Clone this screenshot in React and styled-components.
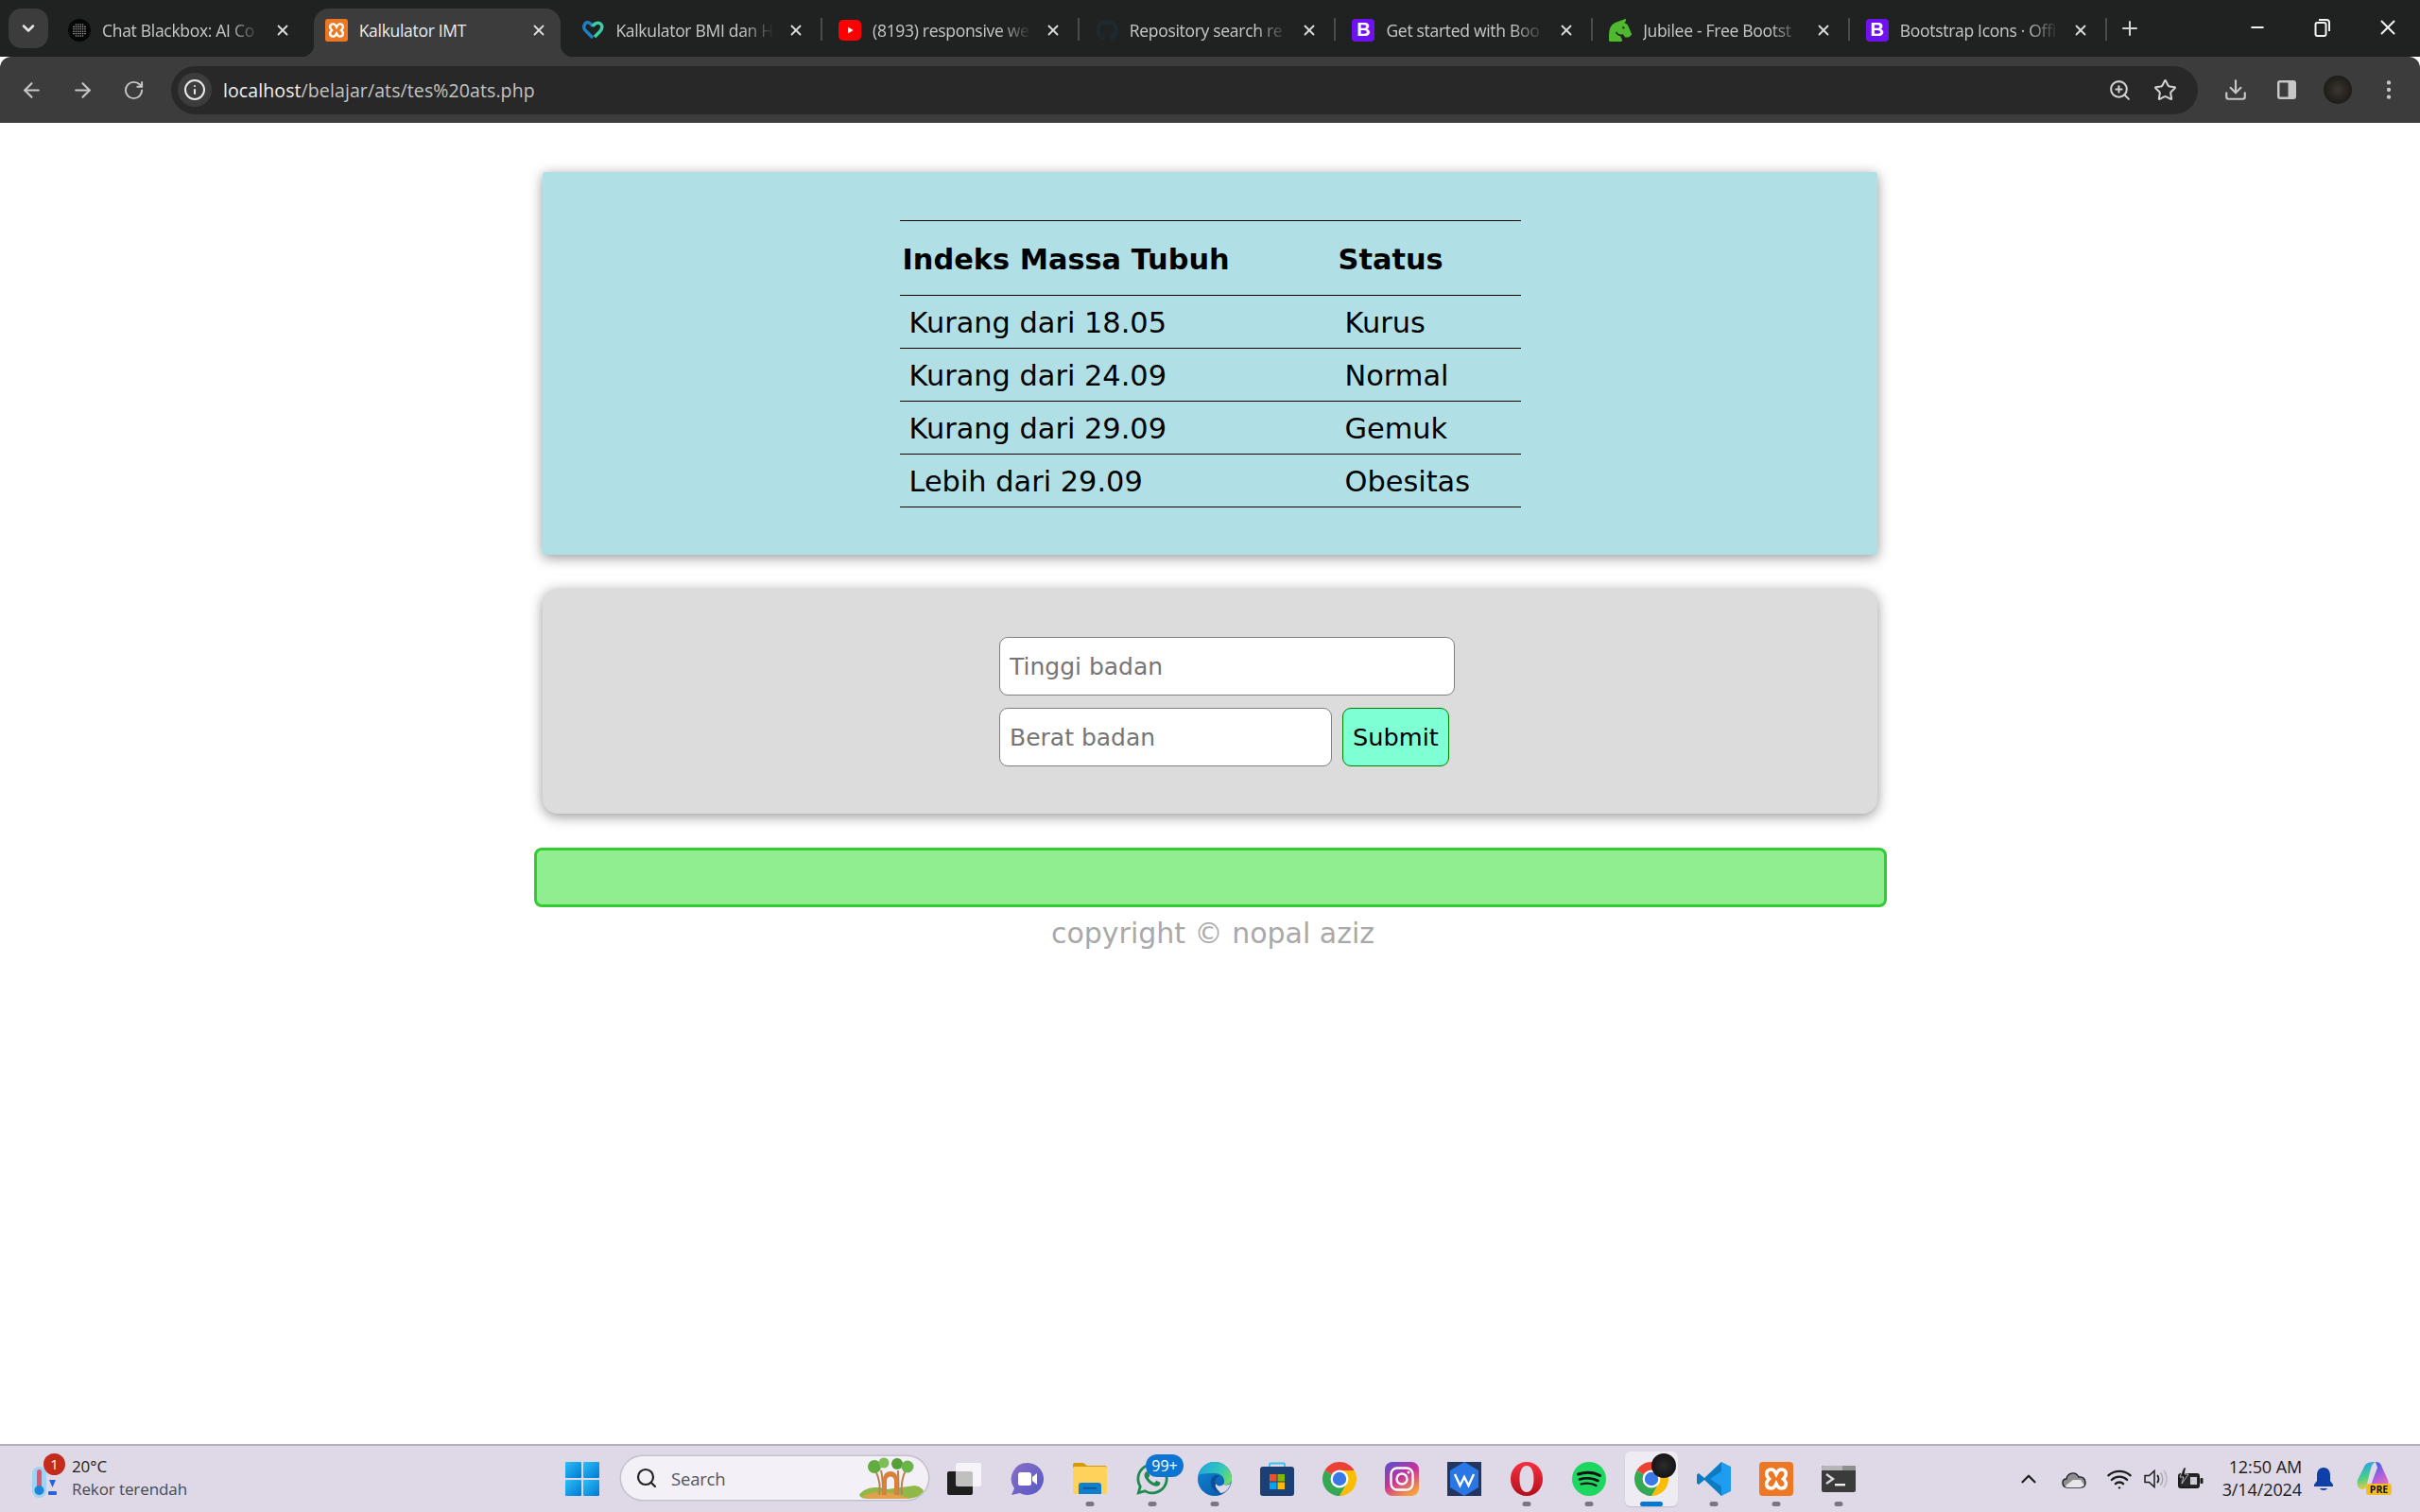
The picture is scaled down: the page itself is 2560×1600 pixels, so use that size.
import React from "react";
import styled, { createGlobalStyle } from "styled-components";
import {
  ArrowLeft,
  ArrowRight,
  RotateCw,
  Info,
  ZoomIn,
  Star,
  Download,
  X,
  Plus,
  Minus,
  ChevronDown,
  ChevronUp,
  EllipsisVertical,
  Search,
  Wifi,
} from "lucide-react";
import { FaGithub, FaHorseHead, FaWhatsapp } from "react-icons/fa";

const GlobalStyle = createGlobalStyle`
  html, body { margin: 0; padding: 0; background: #fff; }
  body { font-family: "Open Sans", "Liberation Sans", sans-serif; }
  * { box-sizing: border-box; }
`;

const Screen = styled.div`
  display: flex;
  flex-direction: column;
  height: 1600px;
  width: 2560px;
  overflow: hidden;
`;

/* browser chrome */
const TabStrip = styled.div`
  display: flex;
  height: 60px;
  padding-top: 9px;
  padding-left: 9px;
  background: #202222;
  flex-shrink: 0;
`;
const TabMenu = styled.div`
  width: 42px;
  height: 42px;
  margin-right: 9px;
  border-radius: 14px;
  background: #3c3c3c;
  color: #e6e6e6;
  display: flex;
  align-items: center;
  justify-content: center;
`;
const Tab = styled.div`
  position: relative;
  isolation: isolate;
  width: 271.7px;
  height: 51px;
  display: flex;
  align-items: center;
  padding: 0 22px 6px 12px;
  color: ${(p) => (p.$active ? "#ececec" : "#c8c8c8")};
  &::before {
    content: "";
    display: ${(p) => (p.$active ? "block" : "none")};
    position: absolute;
    z-index: -1;
    left: 0;
    right: 10px;
    top: 0;
    bottom: 0;
    border-radius: 16px 16px 0 0;
    background: #3c3c3c;
  }
  &::after {
    content: "";
    display: ${(p) => (p.$sep || p.$active ? "block" : "none")};
    position: absolute;
    z-index: -2;
    ${(p) =>
      p.$active
        ? `
    left: -13px;
    right: -3px;
    bottom: 0;
    height: 13px;
    background:
      radial-gradient(circle at 0 0, #202222 13px, #3c3c3c 13.5px) left / 13px 13px no-repeat,
      radial-gradient(circle at 100% 0, #202222 13px, #3c3c3c 13.5px) right / 13px 13px no-repeat;
    `
        : `
    right: 5px;
    top: 10px;
    height: 24px;
    width: 2px;
    background: #4a4c4c;
    `}
  }
`;
const TabTitle = styled.span`
  flex: 1;
  min-width: 0;
  margin: 0 12px;
  font-size: 17.5px;
  letter-spacing: -0.3px;
  white-space: nowrap;
  overflow: hidden;
  -webkit-mask-image: ${(p) => (p.$active ? "none" : "linear-gradient(to right, #000 80%, transparent 100%)")};
  mask-image: ${(p) => (p.$active ? "none" : "linear-gradient(to right, #000 80%, transparent 100%)")};
`;
const TabClose = styled.span`
  width: 22px;
  display: flex;
  justify-content: center;
  color: #dcdcdc;
`;
const NewTab = styled.div`
  width: 40px;
  height: 42px;
  margin-left: -1px;
  display: flex;
  align-items: center;
  justify-content: center;
  color: #d6d6d6;
`;
const WindowControls = styled.div`
  margin-left: auto;
  display: flex;
  height: 42px;
  margin-top: -1px;
  color: #f2f2f2;
  align-items: center;
`;
const WindowButton = styled.div`
  width: 69px;
  display: flex;
  justify-content: center;
`;
const Favicon = styled.div`
  width: 24px;
  height: 24px;
  flex-shrink: 0;
  display: flex;
  align-items: center;
  justify-content: center;
`;
const BootstrapMark = styled(Favicon)`
  background: #7012f0;
  border-radius: 4px;
  color: #fff;
  font-family: "Liberation Sans", sans-serif;
  font-weight: 700;
  font-size: 20px;
`;

const Toolbar = styled.div`
  height: 70px;
  flex-shrink: 0;
  display: flex;
  align-items: center;
  padding: 0 6px;
  background: #3c3c3c;
  border-radius: 12px 12px 0 0;
  position: relative;
`;
const ToolButton = styled.div`
  width: ${(p) => p.$w || 54}px;
  height: 48px;
  flex-shrink: 0;
  display: flex;
  align-items: center;
  justify-content: center;
  color: ${(p) => p.$color || "#c7c7c7"};
`;
const AddressBar = styled.div`
  flex: 1;
  height: 51px;
  margin: 0 13px;
  padding: 0 11px 0 7px;
  border-radius: 26px;
  background: #282828;
  display: flex;
  align-items: center;
`;
const InfoBadge = styled.div`
  width: 36px;
  height: 36px;
  border-radius: 50%;
  background: #3c3c3c;
  color: #e8e8e8;
  display: flex;
  align-items: center;
  justify-content: center;
`;
const Url = styled.div`
  margin-left: 12px;
  font-size: 19.5px;
  letter-spacing: 0.1px;
  color: #c4c4c4;
  b {
    font-weight: 400;
    color: #f0f0f0;
  }
`;
const AddressActions = styled.div`
  margin-left: auto;
  display: flex;
`;
const Avatar = styled.div`
  width: 30px;
  height: 30px;
  border-radius: 50%;
  background: radial-gradient(circle at 50% 50%, #3a3630, #12110e);
`;

/* page content */
const Main = styled.main`
  flex: 1;
  display: flex;
  flex-direction: column;
  align-items: center;
  padding-top: 52px;
  background: #fff;
  font-family: "DejaVu Sans", Verdana, sans-serif;
`;
const Card = styled.section`
  width: 1412px;
  background: ${(p) => p.$bg};
  border-radius: ${(p) => p.$radius}px;
  box-shadow: 0 3px 14px rgba(0, 0, 0, 0.42);
  margin-bottom: 36px;
  display: flex;
  justify-content: center;
`;
const TableCard = styled(Card)`
  padding: 51px 0 50px;
`;
const FormCard = styled(Card)`
  padding: 51px 0 50px 36px;
`;
const ResultTable = styled.table`
  width: 657px;
  border-collapse: collapse;
  table-layout: fixed;
  color: #000;
  font-size: 30.4px;
  thead tr {
    border-top: 1px solid #000;
  }
  tr {
    border-bottom: 1px solid #000;
  }
  th {
    height: 79px;
    padding: 2px 3px 0;
    text-align: left;
    font-weight: 700;
  }
  td {
    height: 56px;
    padding: 1px 10px 0;
  }
  col.range {
    width: 461px;
  }
`;
const BmiForm = styled.form`
  width: 482px;
  display: flex;
  flex-wrap: wrap;
  align-items: center;
  row-gap: 13px;
  column-gap: 11px;
`;
const TextInput = styled.input`
  width: ${(p) => p.$w}px;
  height: 62px;
  padding: 0 10px;
  border: 1.5px solid #808080;
  border-radius: 9px;
  background: #fff;
  font-family: inherit;
  font-size: 25px;
  color: #000;
  outline: none;
  &::placeholder {
    color: #757575;
  }
`;
const SubmitButton = styled.button`
  width: 113px;
  height: 62px;
  padding: 0;
  border: 1.5px solid #008000;
  border-radius: 9px;
  background: #7fffd4;
  font-family: inherit;
  font-size: 25.6px;
  color: #000;
`;
const ResultBox = styled.div`
  width: 1431px;
  height: 63px;
  background: #90ee90;
  border: 3px solid #32cd32;
  border-radius: 8px;
`;
const Copyright = styled.footer`
  margin-top: 10px;
  padding-left: 6px;
  font-size: 30px;
  line-height: 36px;
  color: #a9a9a9;
`;

/* windows taskbar */
const Taskbar = styled.div`
  height: 72px;
  flex-shrink: 0;
  display: flex;
  align-items: center;
  background: #ded8e7;
  border-top: 2px solid #b5b0bb;
  font-family: "Open Sans", sans-serif;
  color: #1c1c1c;
`;
const Weather = styled.div`
  width: 598px;
  padding-left: 33px;
  display: flex;
  align-items: center;
  flex-shrink: 0;
`;
const WeatherIcon = styled.div`
  position: relative;
  width: 28px;
  height: 34px;
  margin: 8px 15px 0 0;
`;
const WeatherBadge = styled.span`
  position: absolute;
  left: 13px;
  top: -14px;
  width: 23px;
  height: 23px;
  border-radius: 50%;
  background: #c42b1c;
  color: #fff;
  font-size: 15px;
  line-height: 23px;
  text-align: center;
`;
const StackedText = styled.div`
  display: flex;
  flex-direction: column;
  align-items: ${(p) => p.$align || "flex-start"};
  margin-top: -3px;
  font-size: ${(p) => p.$size || 17}px;
  line-height: 24px;
  letter-spacing: -0.1px;
  span + span {
    color: ${(p) => p.$sub || "#1c1c1c"};
  }
`;
const Start = styled.div`
  width: 36px;
  height: 36px;
  flex-shrink: 0;
  display: grid;
  grid-template-columns: 1fr 1fr;
  gap: 2px;
  span {
    background: linear-gradient(135deg, #2cc0f6, #0078d4);
    border-radius: 1px;
  }
`;
const SearchBox = styled.div`
  width: 325px;
  height: 46px;
  margin: -2px 6px 0 23px;
  padding: 0 4px 0 15px;
  flex-shrink: 0;
  display: flex;
  align-items: center;
  border-radius: 23px;
  background: #f3f0f7;
  box-shadow: 0 0 0 1.5px #c6c0cc;
  color: #222;
`;
const SearchLabel = styled.span`
  margin-left: 14px;
  font-size: 18.5px;
  letter-spacing: -0.2px;
  color: #555;
`;
const SearchArt = styled.div`
  margin-left: auto;
  display: flex;
`;
const AppRow = styled.div`
  display: flex;
  flex-shrink: 0;
`;
const AppItem = styled.div`
  position: relative;
  width: 66px;
  height: 70px;
  display: flex;
  align-items: center;
  justify-content: center;
  &::before {
    content: "";
    display: ${(p) => (p.$active ? "block" : "none")};
    position: absolute;
    left: 5px;
    right: 5px;
    top: 6px;
    bottom: 6px;
    border-radius: 6px;
    background: #eeebf3;
    box-shadow: 0 1px 1px #c3bdcb;
  }
  &::after {
    content: "";
    display: ${(p) => (p.$dot || p.$active ? "block" : "none")};
    position: absolute;
    bottom: 6px;
    left: 50%;
    transform: translateX(-50%);
    width: ${(p) => (p.$active ? 24 : 9)}px;
    height: 5px;
    border-radius: 3px;
    background: ${(p) => (p.$active ? "#0078d4" : "#7b7680")};
  }
  svg {
    position: relative;
    z-index: 1;
  }
`;
const CountBadge = styled.span`
  position: absolute;
  z-index: 2;
  left: 26px;
  top: 9px;
  width: 40px;
  height: 24px;
  border-radius: 12px;
  background: #0c75d1;
  color: #fff;
  font-size: 16px;
  line-height: 24px;
  text-align: center;
`;
const AvatarOverlay = styled.span`
  position: absolute;
  z-index: 2;
  left: 33px;
  top: 8px;
  width: 26px;
  height: 26px;
  border-radius: 50%;
  background: radial-gradient(circle at 50% 50%, #2b2b2b, #0c0c0c);
`;
const Tray = styled.div`
  margin-left: auto;
  display: flex;
  align-items: center;
  padding-right: 25px;
`;
const TrayIcon = styled.div`
  width: ${(p) => p.$w}px;
  display: flex;
  justify-content: center;
`;
const Clock = styled.div`
  margin: 0 9px 0 7px;
  width: 90px;
`;
const Copilot = styled.div`
  position: relative;
  margin-left: 21px;
  width: 42px;
  height: 38px;
`;
const PreBadge = styled.span`
  position: absolute;
  right: 5px;
  bottom: 2px;
  width: 27px;
  height: 12px;
  border-radius: 3px;
  background: #f5bd1f;
  color: #111;
  font-size: 10.5px;
  font-weight: 700;
  line-height: 12px;
  text-align: center;
`;

/* drawings */
const XamppIcon = ({ size = 36 }) => (
  <svg width={size} height={size} viewBox="0 0 36 36">
    <rect width="36" height="36" rx="4" fill="#ed7722" />
    <path
      d="M13 8C7 8 6 14 10.500 18C6 22 7 28 13 28C16 28 17 25 18 23C19 25 20 28 23 28C29 28 30 22 25.500 18C30 14 29 8 23 8C20 8 19 11 18 13C17 11 16 8 13 8Z"
      fill="#ed7722"
      stroke="#fff"
      strokeWidth="3.6"
    />
  </svg>
);

const dotGrid = [6, 8.4, 10.8, 13.2, 15.6, 18];

const BlackboxIcon = () => (
  <svg width="24" height="24" viewBox="0 0 24 24">
    <circle cx="12" cy="12" r="12" fill="#050505" />
    {dotGrid.map((y) =>
      dotGrid
        .filter((x) => Math.hypot(x - 12, y - 12) < 7.4)
        .map((x) => <circle key={`${x}-${y}`} cx={x} cy={y} r="0.8" fill="#a0a0a0" />)
    )}
  </svg>
);

const HeartIcon = () => (
  <svg width="24" height="24" viewBox="0 0 24 24" fill="none" strokeWidth="3.4">
    <path d="M12 20L4 12C1 8 4 3 8 4C10 5 11 6 12 8" stroke="#1f7fc4" />
    <path d="M12 8C14 4 19 3 21 6C23 9 21 12 19 14L14 19" stroke="#3ad0a6" />
  </svg>
);

const YoutubeIcon = () => (
  <svg width="24" height="24" viewBox="0 0 24 24">
    <rect y="1" width="24" height="22" rx="5" fill="#f00" />
    <path d="M10 8.500L15.500 12L10 15.500Z" fill="#fff" />
  </svg>
);

const StoreIcon = () => (
  <svg width="36" height="36" viewBox="0 0 36 36">
    <path d="M10 6V2.500a1 1 0 0 1 1-1H25a1 1 0 0 1 1 1V6" fill="none" stroke="#35c4ee" strokeWidth="1.800" />
    <rect y="5" width="36" height="31" rx="3" fill="#1c3f74" />
    <rect x="10" y="13" width="7.500" height="7.500" fill="#f25022" />
    <rect x="18.500" y="13" width="7.500" height="7.500" fill="#7fba00" />
    <rect x="10" y="21.500" width="7.500" height="7.500" fill="#00a4ef" />
    <rect x="18.500" y="21.500" width="7.500" height="7.500" fill="#ffb900" />
  </svg>
);

const ChromeIcon = () => (
  <svg width="36" height="36" viewBox="0 0 40 40">
    <g transform="translate(-4 -4)">
      <path d="M6.680 14A20 20 0 0 1 41.320 14L24 14A10 10 0 0 0 15.340 19Z" fill="#ea4335" />
      <path d="M41.320 14A20 20 0 0 1 24 44L32.660 29A10 10 0 0 0 24 14Z" fill="#fbbc04" />
      <path d="M24 44A20 20 0 0 1 6.680 14L15.340 19A10 10 0 0 0 32.660 29Z" fill="#34a853" />
      <circle cx="24" cy="24" r="10.500" fill="#fff" />
      <circle cx="24" cy="24" r="8" fill="#3b78e7" />
    </g>
  </svg>
);

const TaskViewIcon = () => (
  <svg width="38" height="36" viewBox="0 0 38 36">
    <rect x="0" y="10" width="27" height="25" rx="2" fill="#1f1f1f" />
    <rect x="9" y="1" width="27" height="25" rx="2" fill="#fff" fillOpacity="0.72" />
  </svg>
);

const MeetIcon = () => (
  <svg width="36" height="36" viewBox="0 0 36 36">
    <defs>
      <linearGradient id="meet" x1="0" y1="0" x2="1" y2="1">
        <stop offset="0" stopColor="#8a6fc4" />
        <stop offset="1" stopColor="#5558c8" />
      </linearGradient>
    </defs>
    <path d="M18 1a17 17 0 1 1-8 32L1 35L4 28A17 17 0 0 1 18 1Z" fill="url(#meet)" />
    <rect x="8" y="11" width="14" height="14" rx="2.500" fill="#fff" />
    <path d="M23 16L28 12V24L23 20Z" fill="#fff" />
  </svg>
);

const FolderIcon = () => (
  <svg width="36" height="36" viewBox="0 0 36 36">
    <path d="M0 3a2 2 0 0 1 2-2H11L15 4H34a2 2 0 0 1 2 2V8H0Z" fill="#d59a0c" />
    <rect y="5" width="36" height="29" rx="1.500" fill="#fdd35c" />
    <path d="M6 34V25a3 3 0 0 1 3-3H27a3 3 0 0 1 3 3V34Z" fill="#0f7fcb" />
    <rect x="11" y="27" width="14" height="1.500" fill="#0b4f8c" />
  </svg>
);

const EdgeIcon = () => (
  <svg width="36" height="36" viewBox="0 0 36 36">
    <defs>
      <linearGradient id="edgeA" x1="0" y1="0.300" x2="1" y2="0.700">
        <stop offset="0" stopColor="#1fa8dc" />
        <stop offset="0.600" stopColor="#34c8b8" />
        <stop offset="1" stopColor="#74dd62" />
      </linearGradient>
      <linearGradient id="edgeB" x1="0" y1="0" x2="0.800" y2="1">
        <stop offset="0" stopColor="#0f8ad8" />
        <stop offset="1" stopColor="#0a5aa8" />
      </linearGradient>
    </defs>
    <circle cx="18" cy="18" r="18" fill="url(#edgeB)" />
    <path d="M1 14C3 5 10 0 18 0C28 0 36 8 36 18C36 23 31 25 27 24C30 20 27 12 18 12C11 12 4 12 1 14Z" fill="url(#edgeA)" />
    <path d="M27 24C24 26 21 26 19 23C17 19 20 16 24 15C21 13 15 14 14 20C13 27 18 32 24 33C27 31 29 28 27 24Z" fill="#0b4f9a" />
    <path d="M19 23C21 26 24 26 27 24C31 25 34 24 35 22C33 29 29 33 24 33C21 29 18 27 19 23Z" fill="#ded8e7" />
  </svg>
);

const InstagramIcon = () => (
  <svg width="36" height="36" viewBox="0 0 36 36">
    <defs>
      <linearGradient id="insta" x1="0.100" y1="0" x2="0.700" y2="1">
        <stop offset="0" stopColor="#5b4fd0" />
        <stop offset="0.500" stopColor="#c9309a" />
        <stop offset="1" stopColor="#f8a13c" />
      </linearGradient>
    </defs>
    <rect width="36" height="36" rx="8" fill="url(#insta)" />
    <rect x="6.500" y="6.500" width="23" height="23" rx="6.500" fill="none" stroke="#fff" strokeWidth="2.400" />
    <circle cx="18" cy="18" r="5.500" fill="none" stroke="#fff" strokeWidth="2.400" />
    <circle cx="25" cy="11" r="1.500" fill="#fff" />
  </svg>
);

const WpsIcon = () => (
  <svg width="36" height="36" viewBox="0 0 36 36">
    <rect width="36" height="36" fill="#23365f" />
    <path d="M18 0L33 9V27L18 36L3 27V9Z" fill="#2a76e4" />
    <path d="M8 13L13.500 25L18 16L22.500 25L28 13" fill="none" stroke="#fff" strokeWidth="2.400" />
  </svg>
);

const OperaIcon = () => (
  <svg width="36" height="36" viewBox="0 0 36 36">
    <defs>
      <linearGradient id="opera" x1="0" y1="0" x2="0" y2="1">
        <stop offset="0" stopColor="#f5303f" />
        <stop offset="1" stopColor="#b30f1c" />
      </linearGradient>
    </defs>
    <path
      fillRule="evenodd"
      d="M18 0C28 0 35 8 35 18C35 28 28 36 18 36C8 36 1 28 1 18C1 8 8 0 18 0ZM18 4C13 4 10.500 10 10.500 18C10.500 26 13 32 18 32C23 32 25.500 26 25.500 18C25.500 10 23 4 18 4Z"
      fill="url(#opera)"
    />
  </svg>
);

const SpotifyIcon = () => (
  <svg width="36" height="36" viewBox="0 0 36 36" fill="none" stroke="#111" strokeLinecap="round">
    <circle cx="18" cy="18" r="18" fill="#1ed760" stroke="none" />
    <path d="M6.500 13C14 10.500 23 11 29.500 14.500" strokeWidth="3" />
    <path d="M8 18.500C14 16.500 22 17 27.500 20" strokeWidth="2.600" />
    <path d="M9.500 23.500C15 22 21 22.500 25.500 25" strokeWidth="2.200" />
  </svg>
);

const VsCodeIcon = () => (
  <svg width="36" height="36" viewBox="0 0 36 36">
    <path d="M26 0L36 5V31L26 36L12 18Z" fill="#1f9cf0" />
    <path d="M26 0L8 17L2 12L0 13.500V22.500L2 24L8 19L26 36V26L14 18L26 10Z" fill="#0a7cc4" />
  </svg>
);

const TerminalIcon = () => (
  <svg width="36" height="28" viewBox="0 0 36 28">
    <rect width="36" height="28" rx="2" fill="#3b3b3b" />
    <path d="M2 0H22V5H0V2a2 2 0 0 1 2-2Z" fill="#b6b6b6" />
    <path d="M22 0H34a2 2 0 0 1 2 2V5H22Z" fill="#8f8f8f" />
    <path d="M5 9L12 14L5 19" fill="none" stroke="#d8d8d8" strokeWidth="2.400" />
    <rect x="14" y="19" width="11" height="2.400" fill="#f0f0f0" />
  </svg>
);

const ThermoIcon = () => (
  <svg width="28" height="34" viewBox="0 0 28 34">
    <rect x="1" y="0" width="15" height="33" rx="7.500" fill="#9fd2f3" />
    <rect x="6" y="3" width="5" height="20" rx="2.500" fill="#e2536d" />
    <circle cx="8.500" cy="25" r="5" fill="#1b86d8" />
    <path d="M19 14H26L22.500 22Z" fill="#2b62d9" />
    <rect x="18" y="26" width="9" height="4" rx="1" fill="#2b62d9" />
  </svg>
);

const SearchArtwork = () => (
  <svg width="70" height="44" viewBox="0 0 70 44">
    <path d="M1 40C6 32 20 30 30 34L60 30C65 31 69 34 69 36C65 42 58 44 50 44H12C6 44 2 43 1 40Z" fill="#8fb848" />
    <path d="M4 42C14 35 36 35 54 44H12Z" fill="#e3a04c" />
    <path d="M22 40C24 30 22 22 18 14M26 40C26 30 26 22 24 14M46 40C45 30 46 22 50 14M42 40C43 30 42 22 42 14" fill="none" stroke="#b98350" strokeWidth="2" />
    <path d="M26 40V24C26 12 42 12 42 24V40H38V25C38 19 30 19 30 25V40Z" fill="#d9813a" />
    <circle cx="17" cy="10" r="7" fill="#62ab40" />
    <circle cx="27" cy="6" r="5.500" fill="#7dbe55" />
    <circle cx="41" cy="7" r="6" fill="#559f38" />
    <circle cx="52" cy="10" r="6.500" fill="#6ab548" />
  </svg>
);

const CloudIcon = () => (
  <svg width="26" height="19" viewBox="0 0 26 19" stroke="#1c1c1c" strokeWidth="1.400">
    <path d="M6 18C2 18 1 15 1 13C1 10 3 9 5 9C6 3 14 0 18 7C23 6 25 10 25 13C25 16 23 18 20 18Z" fill="#8f8d92" />
    <path d="M3 17L12 10H20L24 16L20 18H6Z" fill="#e8e6ea" stroke="none" />
  </svg>
);

const VolumeIcon = () => (
  <svg width="26" height="24" viewBox="0 0 26 24" fill="none" stroke="#1c1c1c" strokeWidth="1.500">
    <path d="M1 8.500H5.500L11 3.500V20.500L5.500 15.500H1Z" />
    <path d="M14 8C16 10 16 14 14 16" strokeWidth="1.800" />
    <path d="M17.500 5.500C20.500 9 20.500 15 17.500 18.500" stroke="#a8a3ad" />
    <path d="M21 3C25 8 25 16 21 21" stroke="#bdb8c2" />
  </svg>
);

const BatteryIcon = () => (
  <svg width="28" height="24" viewBox="0 0 28 24">
    <rect x="2" y="7" width="21" height="14" rx="2" fill="#2a2a2a" stroke="#1c1c1c" strokeWidth="2" />
    <rect x="24.500" y="11" width="3" height="6" rx="1" fill="#1c1c1c" />
    <path d="M7 0L3 10H7L5 17L12 7H8L9.500 0Z" fill="#1c1c1c" stroke="#ded8e7" strokeWidth="0.800" />
    <rect x="14" y="10" width="7" height="8" fill="#cfcad6" />
  </svg>
);

const BellIcon = () => (
  <svg width="20" height="25" viewBox="0 0 20 25">
    <path d="M10 0C5 0 3 4 3 8V14L0 18V20H20V18L17 14V8C17 4 15 0 10 0Z" fill="#0f3fa8" />
    <path d="M6 22H14C13 24.500 7 24.500 6 22Z" fill="#0f3fa8" />
  </svg>
);

const CopilotIcon = () => (
  <svg width="34" height="32" viewBox="0 0 34 32">
    <defs>
      <linearGradient id="copA" x1="0.300" y1="0" x2="0.500" y2="1">
        <stop offset="0" stopColor="#2b9df0" />
        <stop offset="0.550" stopColor="#46cf8c" />
        <stop offset="1" stopColor="#f4c93c" />
      </linearGradient>
      <linearGradient id="copB" x1="0.300" y1="0" x2="0.800" y2="1">
        <stop offset="0" stopColor="#2f62e0" />
        <stop offset="0.550" stopColor="#b45fdc" />
        <stop offset="1" stopColor="#f07aa8" />
      </linearGradient>
    </defs>
    <path d="M20 1C24 1 26 3 27 7L33 20C35 25 32 30 26 30H12C14 28 16 24 17 20L22 7Z" fill="url(#copB)" />
    <path d="M8 6C10 2 13 1 20 1C17 2 16 5 15 8L11 24C10 28 9 30 6 30C1 30 0 24 1 20Z" fill="url(#copA)" />
  </svg>
);

const tabs = [
  { title: "Chat Blackbox: AI Co", icon: <BlackboxIcon /> },
  { title: "Kalkulator IMT", icon: <XamppIcon size={24} />, active: true },
  { title: "Kalkulator BMI dan H", icon: <HeartIcon />, sep: true },
  { title: "(8193) responsive we", icon: <YoutubeIcon />, sep: true },
  { title: "Repository search re", icon: <FaGithub size={24} color="#1f2a30" />, sep: true },
  { title: "Get started with Boo", icon: <BootstrapMark>B</BootstrapMark>, sep: true },
  { title: "Jubilee - Free Bootst", icon: <FaHorseHead size={24} color="#4fb82f" />, sep: true },
  { title: "Bootstrap Icons · Offi", icon: <BootstrapMark>B</BootstrapMark>, sep: true },
];

const apps = [
  { id: "view", icon: <TaskViewIcon /> },
  { id: "meet", icon: <MeetIcon /> },
  { id: "folder", icon: <FolderIcon />, dot: true },
  { id: "whatsapp", icon: <FaWhatsapp size={38} color="#1d8a4f" />, dot: true, badge: "99+" },
  { id: "edge", icon: <EdgeIcon />, dot: true },
  { id: "store", icon: <StoreIcon /> },
  { id: "chrome", icon: <ChromeIcon /> },
  { id: "instagram", icon: <InstagramIcon /> },
  { id: "wps", icon: <WpsIcon /> },
  { id: "opera", icon: <OperaIcon />, dot: true },
  { id: "spotify", icon: <SpotifyIcon />, dot: true },
  { id: "chrome-active", icon: <ChromeIcon />, active: true },
  { id: "vscode", icon: <VsCodeIcon />, dot: true },
  { id: "xampp", icon: <XamppIcon />, dot: true },
  { id: "terminal", icon: <TerminalIcon />, dot: true },
];

const rows = [
  ["Kurang dari 18.05", "Kurus"],
  ["Kurang dari 24.09", "Normal"],
  ["Kurang dari 29.09", "Gemuk"],
  ["Lebih dari 29.09", "Obesitas"],
];

export default function App() {
  return (
    <Screen>
      <GlobalStyle />
      <TabStrip>
        <TabMenu>
          <ChevronDown size={20} strokeWidth={3} />
        </TabMenu>
        {tabs.map((tab) => (
          <Tab key={tab.title} $active={tab.active} $sep={tab.sep}>
            <Favicon>{tab.icon}</Favicon>
            <TabTitle $active={tab.active}>{tab.title}</TabTitle>
            <TabClose>
              <X size={18} strokeWidth={2.4} />
            </TabClose>
          </Tab>
        ))}
        <NewTab>
          <Plus size={24} strokeWidth={2} />
        </NewTab>
        <WindowControls>
          <WindowButton>
            <Minus size={20} strokeWidth={2.4} />
          </WindowButton>
          <WindowButton>
            <svg width="18" height="20" viewBox="0 0 18 20" fill="none" stroke="currentColor" strokeWidth="2">
              <rect x="1.500" y="5" width="11" height="14" rx="2" />
              <path d="M5 2H13a3 3 0 0 1 3 3V14" />
            </svg>
          </WindowButton>
          <WindowButton>
            <X size={26} strokeWidth={1.8} />
          </WindowButton>
        </WindowControls>
      </TabStrip>

      <Toolbar>
        <ToolButton>
          <ArrowLeft size={25} />
        </ToolButton>
        <ToolButton>
          <ArrowRight size={25} />
        </ToolButton>
        <ToolButton>
          <RotateCw size={23} />
        </ToolButton>
        <AddressBar>
          <InfoBadge>
            <Info size={24} />
          </InfoBadge>
          <Url>
            <b>localhost</b>/belajar/ats/tes%20ats.php
          </Url>
          <AddressActions>
            <ToolButton $w={48} $color="#d0d0d0">
              <ZoomIn size={25} />
            </ToolButton>
            <ToolButton $w={48} $color="#d0d0d0">
              <Star size={25} />
            </ToolButton>
          </AddressActions>
        </AddressBar>
        <ToolButton>
          <Download size={26} />
        </ToolButton>
        <ToolButton>
          <svg width="22" height="22" viewBox="0 0 22 22">
            <rect x="1" y="1" width="20" height="20" rx="3" fill="#c7c7c7" />
            <rect x="3.500" y="3.500" width="9" height="15" fill="#3c3c3c" />
          </svg>
        </ToolButton>
        <ToolButton>
          <Avatar />
        </ToolButton>
        <ToolButton>
          <EllipsisVertical size={26} />
        </ToolButton>
      </Toolbar>

      <Main>
        <TableCard $bg="#b0e0e6" $radius={3}>
          <ResultTable>
            <colgroup>
              <col className="range" />
              <col />
            </colgroup>
            <thead>
              <tr>
                <th>Indeks Massa Tubuh</th>
                <th>Status</th>
              </tr>
            </thead>
            <tbody>
              {rows.map(([range, status]) => (
                <tr key={range}>
                  <td>{range}</td>
                  <td>{status}</td>
                </tr>
              ))}
            </tbody>
          </ResultTable>
        </TableCard>

        <FormCard $bg="#dcdcdc" $radius={16}>
          <BmiForm>
            <TextInput $w={482} placeholder="Tinggi badan" />
            <TextInput $w={352} placeholder="Berat badan" />
            <SubmitButton type="button">Submit</SubmitButton>
          </BmiForm>
        </FormCard>

        <ResultBox />
        <Copyright>copyright © nopal aziz</Copyright>
      </Main>

      <Taskbar>
        <Weather>
          <WeatherIcon>
            <ThermoIcon />
            <WeatherBadge>1</WeatherBadge>
          </WeatherIcon>
          <StackedText $sub="#4a4a4a">
            <span>20°C</span>
            <span>Rekor terendah</span>
          </StackedText>
        </Weather>
        <Start>
          <span />
          <span />
          <span />
          <span />
        </Start>
        <SearchBox>
          <Search size={24} strokeWidth={2.2} />
          <SearchLabel>Search</SearchLabel>
          <SearchArt>
            <SearchArtwork />
          </SearchArt>
        </SearchBox>
        <AppRow>
          {apps.map((app) => (
            <AppItem key={app.id} $dot={app.dot} $active={app.active}>
              {app.icon}
              {app.badge && <CountBadge>{app.badge}</CountBadge>}
              {app.active && <AvatarOverlay />}
            </AppItem>
          ))}
        </AppRow>
        <Tray>
          <TrayIcon $w={48}>
            <ChevronUp size={26} strokeWidth={2} />
          </TrayIcon>
          <TrayIcon $w={48}>
            <CloudIcon />
          </TrayIcon>
          <TrayIcon $w={48}>
            <Wifi size={28} />
          </TrayIcon>
          <TrayIcon $w={30}>
            <VolumeIcon />
          </TrayIcon>
          <TrayIcon $w={42}>
            <BatteryIcon />
          </TrayIcon>
          <Clock>
            <StackedText $align="flex-end" $size={18}>
              <span>12:50 AM</span>
              <span>3/14/2024</span>
            </StackedText>
          </Clock>
          <TrayIcon $w={28}>
            <BellIcon />
          </TrayIcon>
          <Copilot>
            <CopilotIcon />
            <PreBadge>PRE</PreBadge>
          </Copilot>
        </Tray>
      </Taskbar>
    </Screen>
  );
}
